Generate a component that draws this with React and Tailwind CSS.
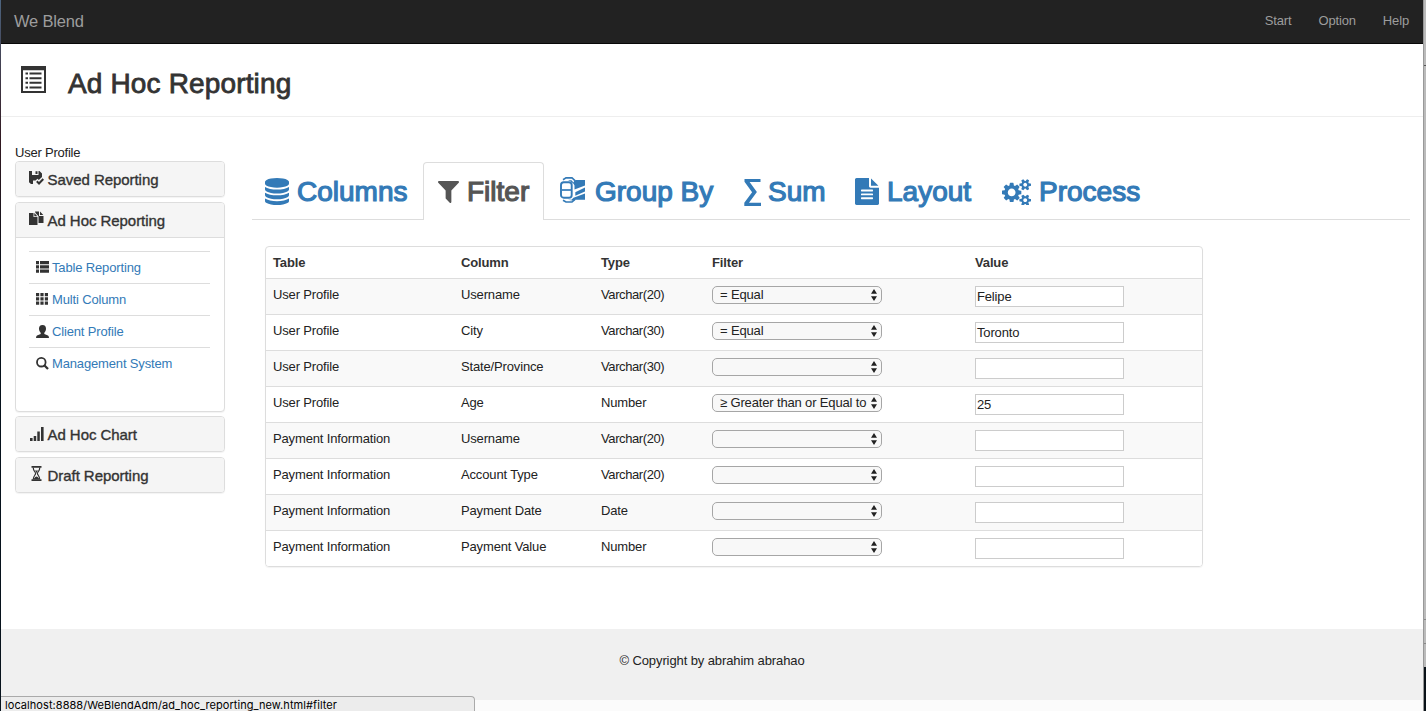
import React from "react";

const Svg = ({ w, h, vb, className = "", children }) => (
  <svg width={w} height={h} viewBox={vb} preserveAspectRatio="none" fill="currentColor" className={"shrink-0 " + className}>
    {children}
  </svg>
);

const smallCog =
  "q0 16-149 31-12 27-30 52 51 113 51 138 0 4-4 7-122 71-124 71-8 0-46-47t-52-68q-20 2-30 2t-30-2q-14 21-52 68t-46 47q-2 0-124-71-4-3-4-7 0-25 51-138-18-25-30-52-149-15-149-31v-140q0-16 149-31 13-29 30-52-51-113-51-138 0-4 4-7 4-2 35-20t59-34 30-16q8 0 46 46.5t52 67.5q20-2 30-2t30 2q51-71 92-112l6-2q4 0 124 70 4 3 4 7 0 25-51 138 17 23 30 52 149 15 149 31z";

const DatabaseIcon = () => (
  <Svg w={24} h={27} vb="0 0 1536 1792" className="-mt-px">
    <path d="M768 768q237 0 443-43t325-127v170q0 69-103 128t-280 93.500-385 34.500-385-34.500-280-93.500-103-128v-170q119 84 325 127t443 43zM768 1536q237 0 443-43t325-127v170q0 69-103 128t-280 93.500-385 34.500-385-34.500-280-93.500-103-128v-170q119 84 325 127t443 43zM768 1152q237 0 443-43t325-127v170q0 69-103 128t-280 93.500-385 34.500-385-34.500-280-93.500-103-128v-170q119 84 325 127t443 43zM768 0q208 0 385 34.500t280 93.500 103 128v128q0 69-103 128t-280 93.500-385 34.500-385-34.500-280-93.500-103-128v-128q0-69 103-128t280-93.500 385-34.500z" />
  </Svg>
);
const FilterIcon = () => (
  <Svg w={21} h={22} vb="192 256 1408 1408" className="mt-px -ml-px">
    <path d="M1595 295q17 41-14 70l-493 493v742q0 42-39 59-13 5-25 5-27 0-45-19l-256-256q-19-19-19-45v-486l-493-493q-31-29-14-70 17-39 59-39h1280q42 0 59 39z" />
  </Svg>
);
const GroupIcon = () => (
  <Svg w={25} h={26} vb="0 0 25 26" className="-mt-1">
    <path d="M3 2.800L6 .900H12L15 3.600" fill="none" stroke="currentColor" strokeWidth="1.600" />
    <path d="M3 23.200L6 25H12L15 22.400" fill="none" stroke="currentColor" strokeWidth="1.600" />
    <path d="M8 3.300H11.500L13.500 5.500Q14 3 15.500 3H25V8.500L14.500 12.500V8.500Q13 5 8 3.300Z" />
    <path d="M15.300 15.200L25 10.600V14.500L15.300 18.700Z" />
    <path d="M8 22.700H11.500L13.500 20.700L25 16.500V22.700H15.500Q13.500 24 12 23.500Z" />
    <rect x="1" y="5.300" width="10.700" height="15.400" rx="2.800" fill="white" stroke="currentColor" strokeWidth="1.900" />
    <path d="M2 13h9" fill="none" stroke="currentColor" strokeWidth="1.700" />
  </Svg>
);
const SumIcon = () => (
  <Svg w={17} h={27} vb="0 0 17 28" className="mt-0.5">
    <path d="M.500 0H16.500V3.200H5.600L12.900 13.600L5 24.600H17V28H.300V24.600L8.100 13.700L.500 2.900Z" />
  </Svg>
);
const FileIcon = () => (
  <Svg w={24} h={27} vb="0 0 1536 1792" className="-mt-px">
    <path fillRule="evenodd" d="M1468 476q14 14 28 36h-472v-472q22 14 36 28zM992 640h544v1056q0 40-28 68t-68 28H96q-40 0-68-28t-28-68V96q0-40 28-68t68-28h800v544q0 40 28 68t68 28zM1152 1376v-64q0-32-32-32H416q-32 0-32 32v64q0 32 32 32h704q32 0 32-32zM1152 1120v-64q0-32-32-32H416q-32 0-32 32v64q0 32 32 32h704q32 0 32-32zM1152 864v-64q0-32-32-32H416q-32 0-32 32v64q0 32 32 32h704q32 0 32-32z" />
  </Svg>
);
const CogsIcon = () => (
  <Svg w={29} h={27} vb="0 0 1920 1792" className="-mt-px">
    <path
      d={
        "M896 960q0-106-75-181t-181-75-181 75-75 181 75 181 181 75 181-75 75-181zm768 512q0-52-38-90t-90-38-90 38-38 90q0 53 37.500 90.500t90.500 37.500 90.500-37.500 37.500-90.500zm0-1024q0-52-38-90t-90-38-90 38-38 90q0 53 37.500 90.500t90.500 37.500 90.500-37.500 37.500-90.500zm-384 421v185q0 10-7 19.500t-16 10.500l-155 24q-11 35-32 76 34 48 90 115 7 11 7 20 0 12-7 19-23 30-82.500 89.500t-78.500 59.500q-11 0-21-7l-115-90q-37 19-77 31-11 108-23 155-7 24-30 24h-186q-11 0-20-7.500t-10-17.500l-23-153q-34-10-75-31l-118 89q-7 7-20 7-11 0-21-8-144-133-144-160 0-9 7-19 10-14 41-53t47-61q-23-44-35-82l-152-24q-10-1-17-9.500t-7-19.500v-185q0-10 7-19.500t16-10.500l155-24q11-35 32-76-34-48-90-115-7-11-7-20 0-12 7-20 22-30 82-89t79-59q11 0 21 7l115 90q34-18 77-32 11-108 23-154 7-24 30-24h186q11 0 20 7.500t10 17.500l23 153q34 10 75 31l118-89q8-7 20-7 11 0 21 8 144 133 144 160 0 8-7 19-12 16-42 54t-45 60q23 48 34 82l152 23q10 2 17 10.500t7 19.500z" +
        "M1920 1402v140" + smallCog +
        "M1920 378v140" + smallCog
      }
    />
  </Svg>
);

const PageIcon = () => (
  <Svg w={25} h={27} vb="0 0 25 27" className="mt-0.5">
    <path fillRule="evenodd" d="M0 0H25V27H0ZM2 4.200V25H23V4.200Z" />
    <path d="M4.500 6.500h2.500v2h-2.500zM8.500 6.500h12v2h-12zM4.500 11.200h2.500v2h-2.500zM8.500 11.200h12v2h-12zM4.500 15.800h2.500v2h-2.500zM8.500 15.800h12v2h-12zM4.500 20.400h2.500v2h-2.500zM8.500 20.400h12v2h-12z" />
  </Svg>
);
const SavedIcon = () => (
  <Svg w={15} h={14} vb="0 0 15 14" className="mt-0.5">
    <path d="M0 0H3V4H9.500V0H10.500L13 2.500V6L9.800 9L8.500 7.700L6.500 9.500H4V13H2L0 11.200ZM6.500.300H8.500V3H6.500Z" />
    <path d="M7.800 10.300L10 12.500L14.300 8" fill="none" stroke="currentColor" strokeWidth="2" />
  </Svg>
);
const CopyIcon = () => (
  <Svg w={15} h={15} vb="0 0 15 15">
    <path d="M0 2H4.500V6H8.500V14H0ZM5.300 2L8.300 5.200H5.300ZM6 .500H10V5H14.500V12H9.500V5.300L6.500 2ZM11 .500L14.300 4H11Z" />
  </Svg>
);
const ChartIcon = () => (
  <Svg w={14} h={15} vb="0 0 14 15" className="mt-0.5">
    <path d="M0 12h2.600v3H0zM3.700 10h2.500v5H3.700zM7.300 5.500h2.500V15H7.300zM11 1h2.600v14H11z" />
  </Svg>
);
const HourglassIcon = () => (
  <Svg w={11} h={15} vb="0 0 11 15">
    <path d="M.500 0h10v1.700H.500zM.500 13.300h10V15H.500z" />
    <path d="M2.200 1.500C2.200 5 4.600 6 4.600 7.500S2.200 10 2.200 13.500M8.800 1.500C8.800 5 6.400 6 6.400 7.500S8.800 10 8.800 13.500" fill="none" stroke="currentColor" strokeWidth="1.200" />
    <path d="M3 12.500Q5.500 8.500 8 12.500V13.500H3zM4 4.500h3L5.500 7z" />
  </Svg>
);
const ListIcon = () => (
  <Svg w={13} h={12} vb="0 0 13 12">
    <path d="M0 0h3v3.200H0zM4 0h9v3.200H4zM0 4.300h3v3.200H0zM4 4.300h9v3.200H4zM0 8.600h3v3.200H0zM4 8.600h9v3.200H4z" />
  </Svg>
);
const GridIcon = () => (
  <Svg w={12} h={12} vb="0 0 12 12">
    <path d="M0 0h3.200v3.200H0zM4.400 0h3.200v3.200H4.400zM8.800 0H12v3.200H8.800zM0 4.300h3.200v3.200H0zM4.400 4.300h3.200v3.200H4.400zM8.800 4.300H12v3.200H8.800zM0 8.600h3.200v3.200H0zM4.400 8.600h3.200v3.200H4.400zM8.800 8.600H12v3.200H8.800z" />
  </Svg>
);
const UserIcon = () => (
  <Svg w={13} h={13} vb="0 0 13 13">
    <path d="M6.500 0C9 0 10 1.700 10 3.800C10 5.500 9.200 7 8.300 7.800V9L12 10.600Q13 11.200 13 13H0Q0 11.200 1 10.600L4.700 9V7.800C3.800 7 3 5.500 3 3.800C3 1.700 4 0 6.500 0Z" />
  </Svg>
);
const SearchIcon = () => (
  <Svg w={13} h={13} vb="0 0 13 13">
    <circle cx="5.300" cy="5.200" r="4.300" fill="none" stroke="currentColor" strokeWidth="1.800" />
    <path d="M8.300 8.300L12 12" stroke="currentColor" strokeWidth="2.300" />
  </Svg>
);

const medium15 = "text-[15px] leading-[17px] tracking-[-0.05px] [-webkit-text-stroke:0.35px_currentColor]";

const Panel = ({ icon, title, pad, className = "", children }) => (
  <section className={"overflow-hidden rounded border border-[#ddd] bg-white shadow-[0_1px_1px_rgba(0,0,0,0.05)] " + className}>
    <div className="flex h-[34px] items-center bg-[#f5f5f5] pl-[13px]">
      <span className={"flex w-[18.500px] pb-1 " + pad}>{icon}</span>
      <h4 className={"whitespace-nowrap " + medium15}>{title}</h4>
    </div>
    {children}
  </section>
);

const links = [
  [<ListIcon />, "Table Reporting"],
  [<GridIcon />, "Multi Column"],
  [<UserIcon />, "Client Profile"],
  [<SearchIcon />, "Management System"],
];

const rows = [
  ["User Profile", "Username", "Varchar(20)", "= Equal", "Felipe"],
  ["User Profile", "City", "Varchar(30)", "= Equal", "Toronto"],
  ["User Profile", "State/Province", "Varchar(30)", "", ""],
  ["User Profile", "Age", "Number", "≥ Greater than or Equal to", "25"],
  ["Payment Information", "Username", "Varchar(20)", "", ""],
  ["Payment Information", "Account Type", "Varchar(20)", "", ""],
  ["Payment Information", "Payment Date", "Date", "", ""],
  ["Payment Information", "Payment Value", "Number", "", ""],
];

const tabs = [
  { icon: <DatabaseIcon />, label: "Columns", box: "w-[171px] pl-[13px] pt-px", gap: "w-[32px]" },
  { icon: <FilterIcon />, label: "Filter", box: "w-[121px] pl-[15px]", gap: "w-[28px]", active: true },
  { icon: <GroupIcon />, label: "Group By", box: "w-[184px] pl-[16px] pt-px", gap: "w-[35px]" },
  { icon: <SumIcon />, label: "Sum", box: "w-[112px] pl-[16px] pt-px", gap: "w-[24px]" },
  { icon: <FileIcon />, label: "Layout", box: "w-[147px] pl-[15px] pt-px", gap: "w-[32px]" },
  { icon: <CogsIcon />, label: "Process", box: "w-[170px] pl-[15px] pt-px", gap: "w-[37px]" },
];

const grid = "grid grid-cols-[188px_140px_111px_263px_1fr] pl-[7px]";

const Select = ({ value }) => (
  <div className="flex h-[18px] w-[170px] items-center justify-between rounded-[5px] border border-[#a6a6a6] bg-[#f8f8f8] pr-1 pl-[7px]">
    <span className="whitespace-nowrap tracking-[-0.15px]">{value}</span>
    <Svg w={6} h={12} vb="0 0 6 12">
      <path d="M0 4.800L3 0L6 4.800zM0 7.200H6L3 12z" />
    </Svg>
  </div>
);

export default function App() {
  return (
    <div className="flex h-[711px] w-[1426px] overflow-hidden bg-white font-['Liberation_Sans',Arial,sans-serif] text-[13px] leading-[18px] tracking-[-0.15px] text-[#333]">
      <div className="w-px shrink-0 bg-linear-to-b from-[#4d6580] via-[#301820] via-20% to-[#07121c] to-40%" />
      <div className="relative flex w-[1422px] shrink-0 flex-col">
        <nav className="flex h-11 shrink-0 items-center border-b border-[#080808] bg-[#222] pr-[14px] pb-px pl-[13px] text-[#9d9d9d]">
          <span className="flex-1 pb-px text-[16.500px] tracking-[-0.2px]">We Blend</span>
          <div className="flex gap-[27px]">
            <span>Start</span>
            <span>Option</span>
            <span>Help</span>
          </div>
        </nav>
        <header className="flex h-[73px] shrink-0 items-center border-b border-[#eee] pl-5">
          <div className="flex w-[47px] pb-1">
            <PageIcon />
          </div>
          <h1 className="pt-2 text-[28px] leading-8 tracking-[0.15px] [-webkit-text-stroke:0.8px_currentColor]">Ad Hoc Reporting</h1>
        </header>

        <main className="flex h-[512px] shrink-0">
          <aside className="flex w-[251px] shrink-0 flex-col gap-[5px] pt-[27px] pr-[27px] pl-[14px]">
            <p className="-mb-[5px] tracking-[-0.22px] text-[#222]">User Profile</p>
            <Panel icon={<SavedIcon />} title="Saved Reporting" className="-mt-px h-9" />
            <Panel icon={<CopyIcon />} title="Ad Hoc Reporting" className="h-[210px]">
              <ul className="border-t border-[#ddd] py-[13px] pr-[14px] pl-[13px]">
                {links.map(([icon, label]) => (
                  <li key={label} className="flex h-8 items-center border-t border-[#ddd] pl-[7px]">
                    <span className="flex w-4 pb-px">{icon}</span>
                    <a className="whitespace-nowrap text-[#337ab7]">{label}</a>
                  </li>
                ))}
              </ul>
            </Panel>
            <Panel icon={<ChartIcon />} title="Ad Hoc Chart" pad="pl-px" className="-mt-px h-9" />
            <Panel icon={<HourglassIcon />} title="Draft Reporting" pad="pl-0.5" className="h-9" />
          </aside>

          <section className="w-[1158px] shrink-0 pt-[45px]">
            <div className="flex h-[58px] border-b border-[#ddd]">
              {tabs.map((t) => (
                <div
                  key={t.label}
                  className={
                    "flex h-[58px] shrink-0 items-center text-[28px] leading-8 tracking-[0px] whitespace-nowrap [-webkit-text-stroke:1.2px_currentColor] " +
                    t.box +
                    (t.active ? " rounded-t border border-b-0 border-[#ddd] bg-white text-[#555]" : " text-[#337ab7]")
                  }
                >
                  <span className={"flex shrink-0 [-webkit-text-stroke:0px] " + t.gap}>{t.icon}</span>
                  {t.label}
                </div>
              ))}
            </div>

            <div className="mt-[26px] ml-[13px] h-[321px] w-[938px] overflow-hidden rounded border border-[#ddd] shadow-[0_1px_1px_rgba(0,0,0,0.05)]">
              <div className={grid + " h-[31px] items-center font-bold"}>
                <span>Table</span>
                <span>Column</span>
                <span>Type</span>
                <span>Filter</span>
                <span>Value</span>
              </div>
              {rows.map(([table, column, type, op, value], i) => (
                <div key={i} className={grid + " h-9 items-start border-t border-[#ddd] pt-[7px] text-[#222] " + (i % 2 === 0 ? "bg-[#f9f9f9]" : "bg-white")}>
                  <span>{table}</span>
                  <span>{column}</span>
                  <span className={type.startsWith("V") ? "tracking-[-0.4px]" : ""}>{type}</span>
                  <Select value={op} />
                  <div className="flex h-[21px] w-[149px] items-center border border-[#ccc] bg-white pl-px">{value}</div>
                </div>
              ))}
            </div>
          </section>
        </main>

        <footer className="h-[71px] shrink-0 bg-[#f0f0f0] pt-[23px] text-center tracking-[-0.1px] text-[#222]">© Copyright by abrahim abrahao</footer>
        <div className="h-[11px] shrink-0 bg-[#fbfbfb]" />

        <div className="absolute bottom-0 left-0 h-[15px] w-[474px] overflow-hidden rounded-tr border-t border-r border-[#aaa] bg-[#ececec] pl-1 font-[Inter,sans-serif] text-[11px] leading-[16px] tracking-[0.06px] whitespace-nowrap text-black">
          localhost:8888/WeBlendAdm/ad_hoc_reporting_new.html#filter
        </div>
      </div>
      <div className="flex w-[3px] shrink-0 flex-col border-l border-[#999] bg-[#bbb]">
        <div className="h-[66px] border-b border-[#555]" />
        <div className="h-[554px] border-b border-[#888]" />
        <div className="h-6 border-b border-[#888]" />
        <div className="h-[23px]" />
        <div className="flex-1 bg-[#0a1218]" />
      </div>
    </div>
  );
}
